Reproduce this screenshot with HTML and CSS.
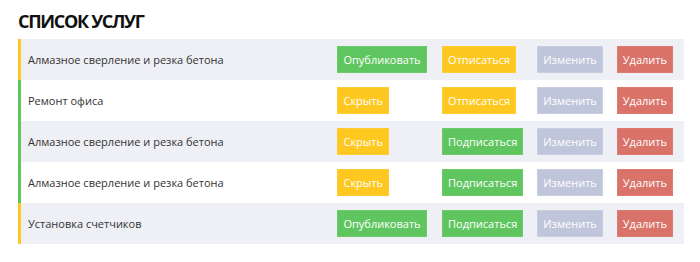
FILE: index.html
```html
<!DOCTYPE html>
<html lang="ru">
<head>
  <meta charset="UTF-8">
  <meta name="viewport" content="width=device-width, initial-scale=1.0">
  <title>Список услуг</title>
  <link rel="stylesheet" href="styles.css">
</head>
<body>
  <div class="services">
    <h1 class="title">Список услуг</h1>
    <table class="list">
      <tr class="row row-wait">
        <td class="name">Алмазное сверление и резка бетона</td>
        <td class="act"><button class="btn btn-green">Опубликовать</button></td>
        <td class="act"><button class="btn btn-yellow">Отписаться</button></td>
        <td class="act"><button class="btn btn-grey">Изменить</button></td>
        <td class="act"><button class="btn btn-red">Удалить</button></td>
      </tr>
      <tr class="row row-ok">
        <td class="name">Ремонт офиса</td>
        <td class="act"><button class="btn btn-yellow">Скрыть</button></td>
        <td class="act"><button class="btn btn-yellow">Отписаться</button></td>
        <td class="act"><button class="btn btn-grey">Изменить</button></td>
        <td class="act"><button class="btn btn-red">Удалить</button></td>
      </tr>
      <tr class="row row-ok">
        <td class="name">Алмазное сверление и резка бетона</td>
        <td class="act"><button class="btn btn-yellow">Скрыть</button></td>
        <td class="act"><button class="btn btn-green">Подписаться</button></td>
        <td class="act"><button class="btn btn-grey">Изменить</button></td>
        <td class="act"><button class="btn btn-red">Удалить</button></td>
      </tr>
      <tr class="row row-ok">
        <td class="name">Алмазное сверление и резка бетона</td>
        <td class="act"><button class="btn btn-yellow">Скрыть</button></td>
        <td class="act"><button class="btn btn-green">Подписаться</button></td>
        <td class="act"><button class="btn btn-grey">Изменить</button></td>
        <td class="act"><button class="btn btn-red">Удалить</button></td>
      </tr>
      <tr class="row row-wait">
        <td class="name">Установка счетчиков</td>
        <td class="act"><button class="btn btn-green">Опубликовать</button></td>
        <td class="act"><button class="btn btn-green">Подписаться</button></td>
        <td class="act"><button class="btn btn-grey">Изменить</button></td>
        <td class="act"><button class="btn btn-red">Удалить</button></td>
      </tr>
    </table>
  </div>
</body>
</html>
```

FILE: styles.css
```css
html,body{
  margin: 0;
}
body{
  font-family: "Open Sans", "Noto Sans", sans-serif;
  color: #333;
  background: #fff;
}
.services{
  padding: 0 16px 0 18px;
}
.title{
  margin: 9px 0 6px;
  font-size: 18px;
  line-height: 24px;
  font-weight: 700;
  letter-spacing: -1.3px;
  text-transform: uppercase;
  color: #111;
}
.list{
  width: 666px;
  border-collapse: collapse;
}
.row:nth-child(odd){
  background-color: #eff0f5;
}
.name{
  font-size: 11px;
  padding: 0 7px;
  border-left: 3px solid #5fc65f;
  height: 41px;
}
.row-wait .name{
  border-left-color: #fec820;
}
.act{
  width: 1px;
  white-space: nowrap;
  padding: 0 7px;
}
.act:last-child{
  padding-right: 11px;
}
.btn{
  font-family: inherit;
  font-size: 11px;
  line-height: 15px;
  padding: 5px;
  color: #fff;
  border: 1px solid transparent;
  display: block;
  cursor: pointer;
}
.btn-green{
  background-color: #5fc65f;
  border-color: #6ccc6c;
}
.btn-yellow{
  background-color: #fec820;
  border-color: #fecd35;
}
.btn-grey{
  background-color: #bfc5da;
  border-color: #c9cee0;
}
.btn-red{
  background-color: #d97268;
  border-color: #dc7b72;
}
```
